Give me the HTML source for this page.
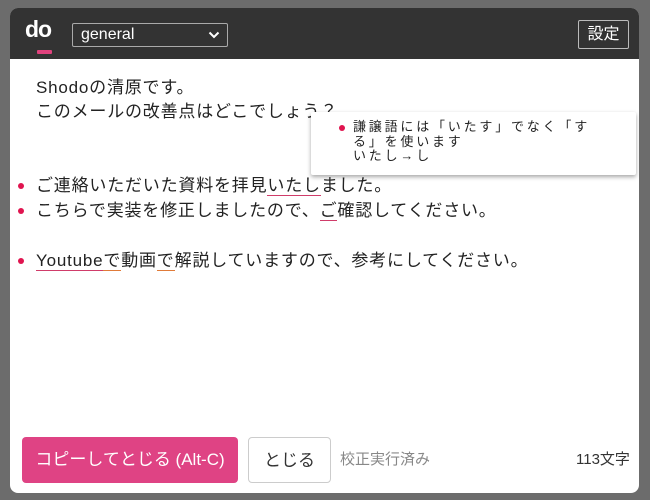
<!DOCTYPE html>
<html><head><meta charset="utf-8"><style>
*{margin:0;padding:0;box-sizing:border-box}
body{width:650px;height:500px;background:#6c6c6c;position:relative;overflow:hidden;font-family:"Liberation Sans","Noto Sans CJK JP",sans-serif}
.card{position:absolute;left:10px;top:8px;width:629px;height:485px;background:#fff;border-radius:8px;overflow:hidden}
.hdr{position:absolute;left:0;top:0;width:629px;height:51px;background:#333}
.logo{position:absolute;left:15px;top:8px;color:#fff;font-weight:bold;font-size:23px;letter-spacing:-1px}
.logo i{position:absolute;left:12px;top:34px;width:15px;height:4px;background:#e0427d;border-radius:1px}
.sel{position:absolute;left:62px;top:15px;width:156px;height:24px;border:1px solid #aaa;border-radius:2px;color:#fff;font-size:16px;padding:1px 8px;line-height:20px}
.sel svg{position:absolute;right:7px;top:7px}
.set{position:absolute;left:568px;top:12px;width:51px;height:29px;border:1px solid #bbb;border-radius:2px;color:#fff;font-size:16px;text-align:center;line-height:27px}
.t{position:absolute;left:26px;font-size:17px;letter-spacing:0.8px;color:#222;white-space:nowrap;line-height:20px}
.dot{position:absolute;left:8px;width:6px;height:6px;border-radius:50%;background:#e0144f}
u{text-decoration:none;border-bottom:1.5px solid #d03c6a}
u.o{border-color:#e07b39}
.tip{position:absolute;left:301px;top:104px;width:325px;height:63px;background:#fff;box-shadow:0 2px 4px rgba(0,0,0,.35);border-radius:2px}
.tip .tx{position:absolute;left:42px;top:8px;font-size:13px;line-height:14.5px;color:#222;letter-spacing:2.8px}
.btn{position:absolute;top:429px;height:46px;border-radius:4px;font-size:17px;text-align:center;line-height:46px}
</style></head><body>
<div class="card">
<div class="hdr">
<div class="logo">do<i></i></div>
<div class="sel">general<svg width="12" height="8" viewBox="0 0 12 8"><path d="M1.5 1.5L6 6 10.5 1.5" stroke="#fff" stroke-width="2" fill="none"/></svg></div>
<div class="set">設定</div>
</div>
<div class="t" style="top:70px">Shodoの清原です。</div>
<div class="t" style="top:94px">このメールの改善点はどこでしょう？</div>
<div class="dot" style="top:175px"></div>
<div class="t" style="top:168px">ご連絡いただいた資料を拝見<u>いたし</u>ました。</div>
<div class="dot" style="top:200px"></div>
<div class="t" style="top:193px">こちらで実装を修正しましたので、<u>ご</u>確認してください。</div>
<div class="dot" style="top:250px"></div>
<div class="t" style="top:243px"><u>Youtube</u><u class="o">で</u>動画<u class="o">で</u>解説していますので、参考にしてください。</div>
<div class="tip"><div class="dot" style="left:28px;top:13px"></div><div class="tx">謙譲語には「いたす」でなく「す<br>る」を使います<br>いたし→し</div></div>
<div class="btn" style="left:12px;width:216px;background:#df4384;color:#fff">コピーしてとじる (Alt-C)</div>
<div class="btn" style="left:238px;width:83px;border:1px solid #ccc;color:#333">とじる</div>
<div class="t" style="left:330px;top:442px;font-size:15px;letter-spacing:0;color:#888">校正実行済み</div>
<div class="t" style="left:566px;top:442px;font-size:15px;letter-spacing:0;color:#333">113文字</div>
</div>
</body></html>
